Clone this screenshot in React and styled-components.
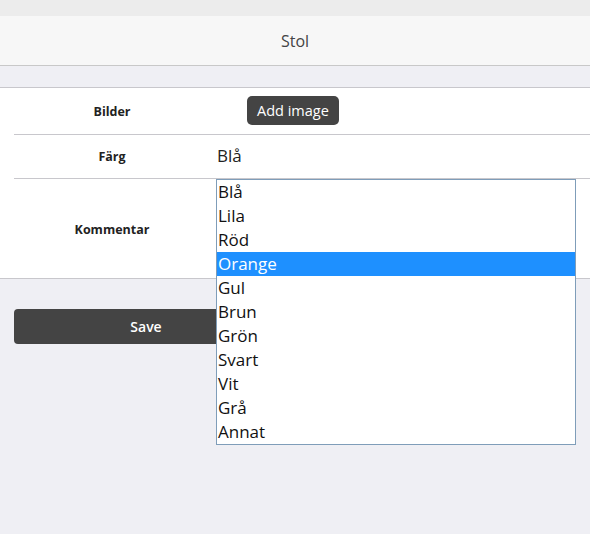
import { useState } from "react"
import styled, { createGlobalStyle } from "styled-components"

const GlobalStyle = createGlobalStyle`
  html, body {
    margin: 0;
    padding: 0;
    background: #efeff4;
    font-family: "Open Sans", "Liberation Sans", sans-serif;
  }
`

const colors = ["Blå", "Lila", "Röd", "Orange", "Gul", "Brun", "Grön", "Svart", "Vit", "Grå", "Annat"]

export default function App() {
  const [hovered, setHovered] = useState(3)

  return <Page>
    <GlobalStyle />
    <TopStrip />
    <Header>Stol</Header>
    <Spacer />
    <Form>
      <Row $height={46}>
        <Label>Bilder</Label>
        <Value>
          <AddButton>Add image</AddButton>
        </Value>
      </Row>
      <Row $height={43}>
        <Label>Färg</Label>
        <Value>
          <Selected>Blå</Selected>
          <DropList>
            {colors.map((c, i) => (
              <Option key={c} $active={i === hovered} onMouseEnter={() => setHovered(i)}>{c}</Option>
            ))}
          </DropList>
        </Value>
      </Row>
      <Row $height={99} $last>
        <Label $offset={2}>Kommentar</Label>
        <Value />
      </Row>
    </Form>
    <Actions>
      <SaveButton>Save</SaveButton>
    </Actions>
  </Page>
}

const Page = styled.div`
  width: 590px;
  min-height: 534px;
  background: #efeff4;
`

const TopStrip = styled.div`
  height: 16px;
  background: #ececec;
`

const Header = styled.div`
  height: 49px;
  background: #f7f7f7;
  border-bottom: 1px solid #c8c8c8;
  display: flex;
  align-items: center;
  justify-content: center;
  font-size: 16px;
  color: #444;
`

const Spacer = styled.div`
  height: 21px;
  border-bottom: 1px solid #c8c7cc;
`

const Form = styled.div`
  background: #fff;
  padding-left: 14px;
  border-bottom: 1px solid #c8c7cc;
`

const Row = styled.div`
  height: ${p => p.$height}px;
  display: grid;
  grid-template-columns: 196px 1fr;
  align-items: center;
  border-bottom: ${p => p.$last ? "none" : "1px solid #c8c7cc"};
`

const Label = styled.div`
  text-align: center;
  font-size: 12.5px;
  font-weight: 700;
  color: #222;
  margin-top: ${p => p.$offset || 0}px;
`

const Value = styled.div`
  position: relative;
  padding-left: 6px;
  height: 100%;
  display: flex;
  align-items: center;
`

const AddButton = styled.button`
  margin-left: 31px;
  margin-top: -2px;
  height: 29px;
  padding: 0 10px;
  border: none;
  border-radius: 5px;
  background: #444;
  color: #fff;
  font-family: "Open Sans", "Liberation Sans", sans-serif;
  font-size: 14.5px;
  cursor: pointer;
`

const Selected = styled.span`
  font-size: 17px;
  color: #222;
  margin-left: 1px;
  margin-top: -2px;
`

const DropList = styled.ul`
  position: absolute;
  top: calc(100% + 1px);
  left: 6px;
  width: 358px;
  margin: 0;
  padding: 0;
  list-style: none;
  background: #fff;
  border: 1px solid #7f9db9;
  z-index: 10;
`

const Option = styled.li`
  height: 24px;
  line-height: 23px;
  padding-left: 1px;
  font-size: 17px;
  color: ${p => p.$active ? "#fff" : "#111"};
  background: ${p => p.$active ? "#1e90ff" : "transparent"};
  cursor: default;
`

const Actions = styled.div`
  padding: 30px 0 0 14px;
`

const SaveButton = styled.button`
  width: 264px;
  height: 35px;
  border: none;
  border-radius: 4px;
  background: #444;
  color: #fff;
  font-family: "Open Sans", "Liberation Sans", sans-serif;
  font-size: 14px;
  font-weight: 600;
`
